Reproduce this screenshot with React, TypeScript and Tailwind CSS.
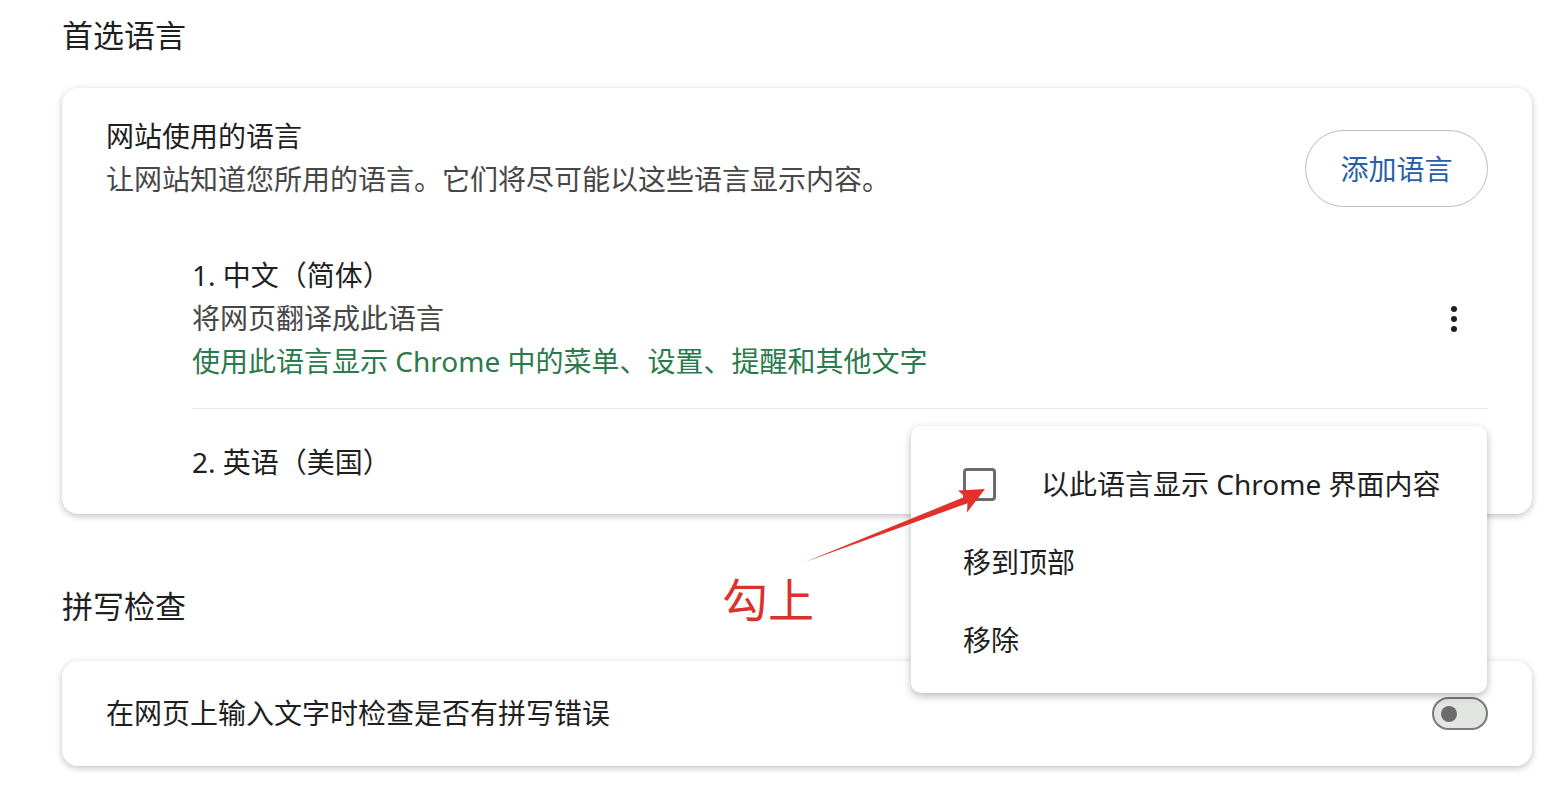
import React from 'react';

const font = { fontFamily: '"Noto Sans", "Noto Sans CJK SC", sans-serif' };

const Dots: React.FC = () => (
    <div className="flex flex-col items-center gap-[4px] mr-[31px]">
        <span className="block w-[6px] h-[6px] rounded-full bg-[#1f1f1f]" />
        <span className="block w-[6px] h-[6px] rounded-full bg-[#1f1f1f]" />
        <span className="block w-[6px] h-[6px] rounded-full bg-[#1f1f1f]" />
    </div>
);

const LanguageMenu: React.FC = () => (
    <div className="absolute left-[911px] top-[426px] w-[576px] h-[267px] bg-white rounded-[10px] shadow-[0_3px_8px_rgba(0,0,0,0.28)] pt-[19px] pl-[52px] text-[28px] text-[#1f1f1f]">
        <div className="h-[78px] flex items-center">
            <span className="block w-[33px] h-[33px] border-[3px] border-[#6b6b6b] rounded-[4px]" />
            <span className="ml-[45px]">以此语言显示 Chrome 界面内容</span>
        </div>
        <div className="h-[78px] flex items-center">移到顶部</div>
        <div className="h-[78px] flex items-center">移除</div>
    </div>
);

const Annotation: React.FC = () => (
    <>
        <svg className="absolute left-0 top-0 pointer-events-none" width="1550" height="802">
            <polygon
                points="805,562 967.5,503.2 967,512.6 985,489 958,490.4 964.9,496.8"
                fill="#e2302a"
            />
        </svg>
        <div className="absolute left-[722px] top-[570px] text-[46px] leading-[58px] text-[#d9342b]">勾上</div>
    </>
);

export default function App() {
    return (
        <div className="relative w-[1550px] h-[802px] bg-white overflow-hidden" style={font}>
            <div className="pl-[62px] pr-[18px] pt-[13px]">
                <h2 className="text-[31px] leading-[44px] text-[#1f1f1f]">首选语言</h2>

                <div className="mt-[31px] bg-white rounded-[16px] shadow-[0_2px_7px_rgba(0,0,0,0.25)] pl-[44px] pr-[44px] pt-[27px] pb-[30px]">
                    <div className="flex items-start justify-between">
                        <div className="text-[28px] leading-[43px]">
                            <div className="text-[#1f1f1f]">网站使用的语言</div>
                            <div className="text-[#474747]">让网站知道您所用的语言。它们将尽可能以这些语言显示内容。</div>
                        </div>
                        <button className="mt-[15px] w-[183px] h-[77px] rounded-full border border-[#b9bcc2] text-[28px] text-[#2a5ea8] flex items-center justify-center">
                            添加语言
                        </button>
                    </div>

                    <div className="ml-[86px] mt-[47px]">
                        <div className="flex items-center justify-between">
                            <div className="text-[28px] leading-[43px]">
                                <div className="text-[#1f1f1f]">1. 中文（简体）</div>
                                <div className="text-[#474747]">将网页翻译成此语言</div>
                                <div className="text-[#2b7a4b]">使用此语言显示 Chrome 中的菜单、设置、提醒和其他文字</div>
                            </div>
                            <Dots />
                        </div>
                        <div className="mt-[25px] border-t border-[#e6e6e6]" />
                        <div className="mt-[32px] text-[28px] leading-[43px] text-[#1f1f1f]">2. 英语（美国）</div>
                    </div>
                </div>

                <h2 className="mt-[70px] text-[31px] leading-[44px] text-[#1f1f1f]">拼写检查</h2>

                <div className="mt-[33px] h-[105px] bg-white rounded-[16px] shadow-[0_2px_7px_rgba(0,0,0,0.25)] pl-[44px] pr-[44px] flex items-center justify-between">
                    <span className="text-[28px] leading-[43px] text-[#1f1f1f]">在网页上输入文字时检查是否有拼写错误</span>
                    <span className="relative w-[56px] h-[33px] rounded-full border-2 border-[#7a7a7a] bg-[#e3e5e3] flex items-center pl-[7px]">
                        <span className="block w-[16px] h-[16px] rounded-full bg-[#6b6b6b]" />
                    </span>
                </div>
            </div>

            <LanguageMenu />
            <Annotation />
        </div>
    );
}
